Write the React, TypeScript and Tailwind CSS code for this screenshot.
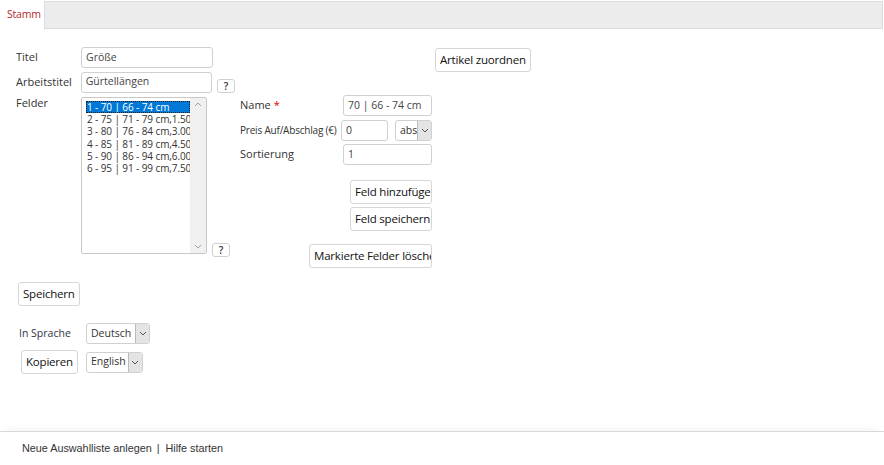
import React from "react";

const ITEMS = [
  "1 - 70 | 66 - 74 cm",
  "2 - 75 | 71 - 79 cm,1.50",
  "3 - 80 | 76 - 84 cm,3.00",
  "4 - 85 | 81 - 89 cm,4.50",
  "5 - 90 | 86 - 94 cm,6.00",
  "6 - 95 | 91 - 99 cm,7.50",
];

const font = "font-['Open_Sans',sans-serif]";

function Input({ value, w }: { value: string; w: string }) {
  return (
    <div
      className={`${w} h-[21px] border border-[#d0d0d0] rounded-[3px] bg-white px-[4px] flex items-center text-[10.5px] text-[#444] overflow-hidden whitespace-nowrap`}
    >
      {value}
    </div>
  );
}

function Btn({ label, w, className = "" }: { label: string; w?: string; className?: string }) {
  return (
    <div
      className={`${w ?? ""} h-[24px] border border-[#d6d6d6] rounded-[3px] bg-white px-[4px] flex items-center text-[11.5px] tracking-[-0.2px] text-[#111] overflow-hidden whitespace-nowrap ${className}`}
    >
      {label}
    </div>
  );
}

function Help({ className = "" }: { className?: string }) {
  return (
    <div
      className={`w-[18px] h-[14px] border border-[#d0d0d0] rounded-[3px] bg-white flex items-center justify-center text-[10px] font-semibold text-[#333] leading-none ${className}`}
    >
      ?
    </div>
  );
}

function Chevron() {
  return (
    <svg width="8" height="5" viewBox="0 0 8 5">
      <path d="M1 1 L4 4 L7 1" stroke="#555" strokeWidth="1" fill="none" />
    </svg>
  );
}

function Select({ value, w }: { value: string; w: string }) {
  return (
    <div className={`${w} h-[21px] border border-[#d0d0d0] rounded-[3px] bg-white flex items-stretch text-[10.5px] text-[#333] overflow-hidden`}>
      <div className="flex-1 flex items-center pl-[4px] overflow-hidden whitespace-nowrap">{value}</div>
      <div className="w-[14px] bg-[#e4e4e4] border-l border-[#bbb] flex items-center justify-center">
        <Chevron />
      </div>
    </div>
  );
}

export default function App() {
  return (
    <div className={`h-[465px] w-[884px] flex flex-col bg-white ${font}`}>
      {/* tab bar */}
      <div className="mt-[1px] h-[28px] w-[883px] bg-[#ececec] border-t border-r border-b border-[#dcdcdc] flex">
        <div className="-mt-px h-[28px] w-[45px] bg-white border-r border-[#dcdcdc] flex items-center pl-[7px] text-[10.5px] tracking-[-0.2px] text-[#b5262b]">
          Stamm
        </div>
      </div>

      <div className="flex-1">
        <div className="flex pt-[18px]">
          {/* left column */}
          <div className="pl-[16px] w-[235px] flex flex-col gap-[3px] text-[11px] text-[#333]">
            <div className="flex items-center">
              <div className="w-[65px]">Titel</div>
              <Input value="Größe" w="w-[132px]" />
            </div>
            <div className="flex items-center">
              <div className="w-[65px]">Arbeitstitel</div>
              <Input value="Gürtellängen" w="w-[132px]" />
              <Help className="ml-[5px] mt-[8px]" />
            </div>
            <div className="flex mt-[1px]">
              <div className="w-[65px] -mt-[2px]">Felder</div>
              <div className="w-[126px] h-[157px] border border-[#c8c8c8] rounded-[2px] bg-white flex overflow-hidden">
                <div className="flex-1 pt-[3px] pl-[4px] overflow-hidden text-[10px] tracking-[-0.1px] leading-[12.2px] text-[#333] whitespace-nowrap">
                  {ITEMS.map((it, i) => (
                    <div
                      key={i}
                      className={
                        i === 0
                          ? "h-[12.2px] bg-[#0078d7] text-white outline-1 outline-dotted outline-[#222] -outline-offset-1 pl-[1px]"
                          : "h-[12.2px] pl-[1px]"
                      }
                    >
                      {it}
                    </div>
                  ))}
                </div>
                <div className="w-[16px] bg-[#f0f0f0] flex flex-col justify-between items-center py-[4px]">
                  <svg width="8" height="5" viewBox="0 0 8 5">
                    <path d="M1 4 L4 1 L7 4" stroke="#a0a0a0" strokeWidth="1" fill="none" />
                  </svg>
                  <svg width="8" height="5" viewBox="0 0 8 5">
                    <path d="M1 1 L4 4 L7 1" stroke="#a0a0a0" strokeWidth="1" fill="none" />
                  </svg>
                </div>
              </div>
              <Help className="ml-[5px] self-end mb-[-3px]" />
            </div>
          </div>

          {/* middle column */}
          <div className="w-[197px] pt-[48px] pl-[5px] flex flex-col text-[11px] text-[#333]">
            <div className="flex items-center h-[21px]">
              <div className="w-[103px]">
                Name <span className="text-[#d00]">*</span>
              </div>
              <Input value="70 | 66 - 74 cm" w="w-[89px]" />
            </div>
            <div className="flex items-center h-[21px] mt-[4px]">
              <div className="w-[101px] whitespace-nowrap text-[10px] tracking-[-0.2px]">Preis Auf/Abschlag (€)</div>
              <Input value="0" w="w-[47px]" />
              <div className="ml-[7px]">
                <Select value="abs" w="w-[37px]" />
              </div>
            </div>
            <div className="flex items-center h-[21px] mt-[3px]">
              <div className="w-[103px]">Sortierung</div>
              <Input value="1" w="w-[89px]" />
            </div>
            <div className="flex flex-col items-end mt-[15px] gap-[3px]">
              <Btn label="Feld hinzufügen" w="w-[82px]" />
              <Btn label="Feld speichern" w="w-[82px]" />
              <Btn label="Markierte Felder löschen" w="w-[123px]" className="mt-[10px]" />
            </div>
          </div>

          {/* right */}
          <div className="pl-[3px] mt-[1px]">
            <Btn label="Artikel zuordnen" />
          </div>
        </div>

        <div className="pl-[18px] mt-[14px] flex">
          <Btn label="Speichern" />
        </div>

        <div className="pl-[19px] mt-[17px] flex items-center text-[10.5px] text-[#334]">
          <div className="w-[67px]">In Sprache</div>
          <Select value="Deutsch" w="w-[64px]" />
        </div>
        <div className="pl-[21px] mt-[6px] flex items-center">
          <Btn label="Kopieren" />
          <div className="ml-[8px]">
            <Select value="English" w="w-[57px]" />
          </div>
        </div>
      </div>

      {/* footer */}
      <div className="h-[34px] border-t border-[#d8d8d8] shadow-[0_-6px_8px_-6px_rgba(0,0,0,0.08)] flex items-center pl-[22px] text-[10.8px] text-[#333] font-['Liberation_Sans',Arial,sans-serif]">
        <span>Neue Auswahlliste anlegen</span>
        <span className="ml-[5px]">|</span>
        <span className="ml-[6px]">Hilfe starten</span>
      </div>
    </div>
  );
}
